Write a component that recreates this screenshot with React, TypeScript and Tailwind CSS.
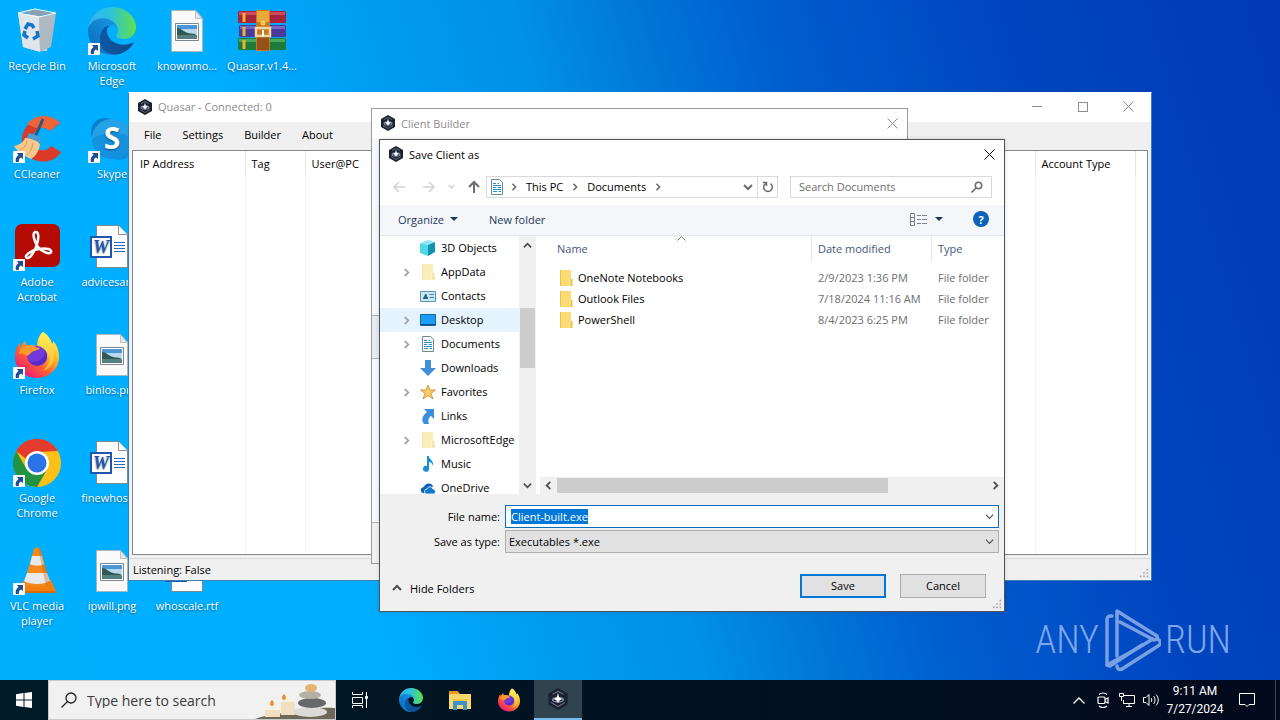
import { useEffect, useRef } from "react";
import type { ReactNode } from "react";

/* ---------- desktop icons ---------- */

const EdgeIcon = ({ className }: { className?: string }) => (
  <svg viewBox="0 0 256 256" className={className}>
    <defs>
      <linearGradient id="edgeDark" x1="0" x2="1">
        <stop offset="0" stopColor="#0c59a4" />
        <stop offset="1" stopColor="#114a8b" />
      </linearGradient>
      <linearGradient id="edgeBlue" x1="1" y1="0" x2="0" y2="1">
        <stop offset="0" stopColor="#1b9de2" />
        <stop offset="1" stopColor="#0669bc" />
      </linearGradient>
      <linearGradient id="edgeGreen" x1="0" x2="1">
        <stop offset="0" stopColor="#35b1f1" />
        <stop offset="0.45" stopColor="#2cc2df" />
        <stop offset="1" stopColor="#5fe04a" />
      </linearGradient>
    </defs>
    <path
      fill="url(#edgeBlue)"
      d="M105.73 241.42a79.2 79.2 0 0 1-22.74-21.34 80.72 80.72 0 0 1 29.53-120c3.12-1.47 8.45-4.13 15.54-4a32.35 32.35 0 0 1 25.69 13 31.88 31.88 0 0 1 6.36 18.66c0-.21 24.46-79.6-80-79.6-43.9 0-80 41.66-80 78.21a130.15 130.15 0 0 0 12.11 56 128 128 0 0 0 156.38 67.11 75.55 75.55 0 0 1-62.78-8z"
    />
    <path
      fill="url(#edgeDark)"
      d="M235.68 190.46a93.73 93.73 0 0 1-10.54 4.71 101.87 101.87 0 0 1-35.9 6.46c-47.32 0-88.54-32.55-88.54-74.32A31.48 31.48 0 0 1 117.13 100c-42.8 1.8-53.8 46.4-53.8 72.53 0 73.88 68.09 81.37 82.76 81.37 7.91 0 19.84-2.3 27-4.56l1.31-.44a128.34 128.34 0 0 0 66.6-52.8 4 4 0 0 0-5.32-5.64z"
    />
    <path
      fill="url(#edgeGreen)"
      d="M152.33 148.86c-.81 1.05-3.3 2.5-3.3 5.66 0 2.61 1.7 5.12 4.72 7.23 14.38 10 41.49 8.68 41.56 8.68a59.56 59.56 0 0 0 30.27-8.35 61.38 61.38 0 0 0 30.43-52.88c.26-22.41-8-37.31-11.34-43.91C223.46 23.84 177.72 0 128 0A128 128 0 0 0 0 126.2c.48-36.54 36.8-66.05 80-66.05 3.5 0 23.46.34 42 10.07 16.34 8.58 24.9 18.94 30.85 29.21 6.18 10.67 7.28 24.15 7.28 29.52s-2.74 13.33-7.8 19.91z"
    />
  </svg>
);

const FirefoxIcon = ({ className }: { className?: string }) => (
  <svg viewBox="0 0 48 48" className={className}>
    <defs>
      <linearGradient id="ffBody" x1="0.85" y1="0.1" x2="0.2" y2="0.95">
        <stop offset="0" stopColor="#fff44f" />
        <stop offset="0.35" stopColor="#ffb02a" />
        <stop offset="0.65" stopColor="#ff5a35" />
        <stop offset="1" stopColor="#e8177c" />
      </linearGradient>
      <linearGradient id="ffTail" x1="0.5" y1="0" x2="0.5" y2="1">
        <stop offset="0" stopColor="#fff25a" />
        <stop offset="1" stopColor="#ffb52c" />
      </linearGradient>
    </defs>
    <path
      fill="url(#ffBody)"
      d="M30 1c5 3 8 8 9 12 1-1 1-2 1-3 4 4 6 10 6 16 0 12-10 21-22 21S2 38 2 26c0-6 2-11 5-14v4c2-3 4-5 6-6 0 2 0 4 1 5 3-1 7-1 10 0 0-6 2-11 6-14z"
    />
    <path
      fill="url(#ffTail)"
      d="M30 1c5 3 8 8 9 13 3 5 3 12 1 17-2 5-6 8-11 9 5-3 8-8 7-14-1-5-5-8-9-9-3-2-2-11 3-16z"
    />
    <circle cx="24" cy="25" r="10" fill="#7139d8" />
    <path fill="#592acb" d="M16 30c4 6 13 6 17 0 2-4 1-8-1-11 1 8-8 14-16 11z" />
    <path
      fill="#ff9a2b"
      d="M8 17c3-3 8-4 12-2 2 1 4 2 7 2-2 3-6 2-8 4-2 1-2 3-5 4-2-2-5-3-8-2 0-2 1-4 2-6z"
    />
  </svg>
);

const ChromeIcon = () => (
  <svg viewBox="0 0 48 48" className="size-12">
    <circle cx="24" cy="24" r="24" fill="#fbc116" />
    <path fill="#e33b2e" d="M24 24 3.2 12A24 24 0 0 1 44.8 12L24 13z" />
    <path fill="#e33b2e" d="M3.2 12A24 24 0 0 1 44.8 12H24L13 20z" />
    <path fill="#229342" d="M3.2 12A24 24 0 0 0 24 48l10.4-18L24 36l-10.4-6z" />
    <circle cx="24" cy="24" r="12" fill="#fff" />
    <circle cx="24" cy="24" r="9.5" fill="#2a74e8" />
  </svg>
);

const RecycleIcon = () => (
  <svg viewBox="0 0 48 48" className="size-12">
    <path fill="#c9d6df" d="M5 6 37 10 34 44 24 44 10 40z" />
    <path fill="#dfe5ea" d="m5 6 21 4 1 35-3-1-14-4z" />
    <path fill="#aeb9c2" d="m26 10 17-4-5 34-11 5z" />
    <path fill="#8f9fab" d="m8 5 15-2 17 3-14 3z" />
    <path fill="none" stroke="#f7fafc" strokeWidth="1.2" d="M5 6 22 2l21 4-17 4z" />
    <g fill="none" stroke="#1273cc" strokeWidth="3.500">
      <path d="m12 22 3-5 4 1 2 3" />
      <path d="m24 24 1 5-5 3" />
      <path d="m15 31-4-3 1-4" />
    </g>
  </svg>
);

const PngIcon = () => (
  <svg viewBox="0 0 48 48" className="size-12">
    <path fill="#fafafa" stroke="#b8b0a8" strokeWidth="0.8" d="M8.500 3.500h24l7 8v33h-31z" />
    <path fill="#e2e6ea" stroke="#b8b0a8" strokeWidth="0.8" d="M32.500 3.500v8h7z" />
    <path fill="#fff" stroke="#7a8894" d="M12.500 16.500h23v17h-23z" />
    <path fill="#4d95d8" d="M14 18h20v6H14z" />
    <path fill="#b8d8ee" d="M14 22h20v5H14z" />
    <path fill="#2f5a52" d="M14 21c4 0 7 4 11 5s6 0 9 2H14z" />
    <path fill="#55807f" d="M14 28h20v4H14z" />
  </svg>
);

const WordIcon = () => (
  <svg viewBox="0 0 48 48" className="size-12">
    <path fill="#fdfdfd" stroke="#777" strokeWidth="0.8" d="M8.500 2.500h22l9 9v33h-31z" />
    <path fill="#fff" stroke="#777" strokeWidth="0.8" d="M30.500 2.500v9h9" />
    <path stroke="#2b67b8" d="M26 19.500h11M26 22.500h11M26 25.500h11M26 28.500h11" />
    <path fill="#fff" stroke="#1d56ad" strokeWidth="2" d="M3 14h20v20H3z" />
    <text x="13" y="30" textAnchor="middle" fontSize="18" fontWeight="700" fontStyle="italic" fill="#1d56ad" fontFamily="Liberation Serif, serif">
      W
    </text>
  </svg>
);

const RarIcon = () => (
  <svg viewBox="0 0 48 48" className="size-12">
    <rect x="0" y="4" width="48" height="12" rx="1.5" fill="#a8243c" />
    <path fill="#d04a5c" d="M1 5h46v3H1z" />
    <rect x="1" y="18" width="47" height="12" rx="1.5" fill="#4a3a9c" />
    <path fill="#7565c4" d="M2 19h45v3H2z" />
    <rect x="0" y="31" width="48" height="12" rx="1.5" fill="#1e7a38" />
    <path fill="#49a95c" d="M1 32h46v3H1z" />
    <path stroke="#f0b428" strokeWidth="3" d="M6 6v9M6 20v9M6 33v9" />
    <path fill="#c8781e" d="M18 3h14v41H18z" />
    <path fill="#e9a83a" d="M19 4h12v11H19z" />
    <path fill="#96501a" d="M19 30h12v13H19z" />
    <path fill="none" stroke="#f2d6a0" strokeWidth="2.500" d="M18 21h14v8H18z" />
    <path stroke="#fff" strokeWidth="2" d="M25 23v6" />
    <circle cx="25" cy="16" r="2.500" fill="#f6cc5a" />
  </svg>
);

const CCleanerIcon = () => (
  <svg viewBox="0 0 48 48" className="size-12">
    <path
      fill="#dc3a28"
      d="M47 8 37 16c-4-5-14-4-17 4-2 7 1 14 8 15 4 1 8-1 10-4l10 6c-5 8-14 11-23 9C13 44 8 33 9 23 11 6 32-6 47 8z"
    />
    <path fill="#f0643c" d="M47 8 37 16c-3-4-9-4-12-2L14 9c8-10 24-11 33-1z" />
    <path stroke="#27597f" strokeWidth="3" d="m30 4-8 18" />
    <path fill="#4a9ad4" d="m16 18 12 4-1 7-14-5z" />
    <path fill="#f6c98a" d="M12 23c6 0 12 3 15 6-1 7-4 12-9 15C11 41 5 37 1 31c5-1 9-3 11-8z" />
    <path fill="none" stroke="#d89a58" d="M14 26c-1 5-4 8-7 9M20 28c-1 6-3 9-6 12" />
  </svg>
);

const SkypeIcon = () => (
  <svg viewBox="0 0 48 48" className="size-12">
    <circle cx="17" cy="17" r="14" fill="#0a7fd0" />
    <circle cx="31" cy="31" r="14" fill="#0a90e0" />
    <circle cx="24" cy="24" r="20" fill="#1592df" />
    <path fill="#35b2ee" fillOpacity="0.5" d="M4 24a20 20 0 0 1 40 0c-8-8-28-8-40 0z" />
    <text x="24" y="34" textAnchor="middle" fontSize="30" fontWeight="700" fill="#fff" fontFamily="Open Sans, sans-serif">
      S
    </text>
  </svg>
);

const AcrobatIcon = () => (
  <svg viewBox="0 0 48 48" className="size-12">
    <rect x="2" y="1" width="45" height="43" rx="7" fill="#b40c05" />
    <path
      fill="none"
      stroke="#fff"
      strokeWidth="2.500"
      d="M22 9c4-1 4 6 2 12-2 7-7 15-10 14-4-2 4-8 12-9 7-1 13 0 12 3s-9 0-13-5c-4-6-6-14-3-15z"
    />
  </svg>
);

const VlcIcon = () => (
  <svg viewBox="0 0 48 48" className="size-12">
    <path fill="#f08010" d="M11 33h27l5 11c0 2-1 2-2 2H7c-1 0-2 0-2-2z" />
    <path fill="#d86a08" d="M5 44h38v2H5z" />
    <path fill="#f58a1c" d="M21 2c1-2 5-2 6 0l10 34c-5 5-21 5-26 0z" />
    <path fill="#e9e9e9" d="m19 9 10 0 2 8c-3 2-11 2-14 0z" />
    <path fill="#e9e9e9" d="m14 26 20 0 3 8c-6 4-20 4-26 0z" />
    <path fill="#c96208" d="m27 2 10 34-4 3L25 1z" fillOpacity="0.35" />
  </svg>
);

const ShortcutBadge = () => (
  <svg viewBox="0 0 12 12" className="absolute bottom-0 left-0 size-3">
    <path fill="#fff" stroke="#c8d0d8" strokeWidth="0.5" d="M0 0h12v12H0z" />
    <path fill="#1f4e96" d="M4 2h6v6L8 6.500C6 7.500 5.500 9 6 11H3C2 8 3 6 5.500 4z" />
  </svg>
);

/* ---------- window icons ---------- */

const QuasarIcon = ({ className }: { className?: string }) => (
  <svg viewBox="0 0 16 16" className={className}>
    <path fill="#1b2130" d="m8 0 7 4v8l-7 4-7-4V4z" />
    <path stroke="#8a95a8" strokeWidth="0.6" fill="none" d="m3 10.500 5 3 5-3M4 4.500l4-2 4 2" />
    <ellipse cx="8" cy="8.500" rx="4.500" ry="2.200" fill="#7d889c" />
    <path fill="#2b3344" d="M5 8h1.500v1.500H5zM9.500 8H11v1.500H9.500z" />
    <path fill="#fff" d="m8 3.500.8 3.200L11 8 8.800 9 8 11l-.8-2L5 8l2.200-1.300z" />
  </svg>
);

const CloseX = () => (
  <svg viewBox="0 0 11 11" className="size-[11px]" fill="none" stroke="currentColor">
    <path d="m.5.5 10 10m0-10-10 10" />
  </svg>
);

const Chevron = ({ dir, className }: { dir: "up" | "down" | "left" | "right"; className?: string }) => {
  const paths = {
    up: "m1 7 4-4 4 4",
    down: "m1 3 4 4 4-4",
    left: "M7 1 3 5l4 4",
    right: "m3 1 4 4-4 4",
  };
  return (
    <svg viewBox="0 0 10 10" className={className ?? "size-[10px]"} fill="none" stroke="currentColor" strokeWidth="2">
      <path d={paths[dir]} />
    </svg>
  );
};

const DocumentIcon = () => (
  <svg viewBox="0 0 16 16" className="size-4">
    <path fill="#fff" stroke="#6f8794" d="M2.500.500h8l3 3v12h-11z" />
    <path stroke="#2a8fc8" d="M4 4.500h3M8.500 4.500H10M4 6.500h8M4 8.500h3M8.500 8.500H12M4 10.500h8M4 12.500h4M9.500 12.500H12" />
  </svg>
);

const FolderIcon = ({ pale }: { pale?: boolean }) => (
  <svg viewBox="0 0 16 16" className="size-4 shrink-0">
    <path fill={pale ? "#fbeebb" : "#fbdc74"} d="M2 0h11v16H2z" />
    <path fill={pale ? "#f5e2a0" : "#eec04c"} d="M2 0h1v16H2zM12 9h2.500v7H12z" />
    <path fill={pale ? "#fff6d6" : "#ffe9a0"} d="M11.500 9.500h1v6h-1z" />
  </svg>
);

const TreeIcon = ({ name }: { name: string }) => {
  switch (name) {
    case "3D Objects":
      return (
        <svg viewBox="0 0 16 16" className="size-4">
          <path fill="#8de8f2" d="M0 3 8 0l7 2-7 3z" />
          <path fill="#4fd8e6" d="m0 3 8 2v11l-8-3z" />
          <path fill="#0f93ae" d="m8 5 7-3v10l-7 4z" />
        </svg>
      );
    case "Contacts":
      return (
        <svg viewBox="0 0 16 16" className="size-4">
          <path fill="#c9e8f6" stroke="#5a93b4" d="M.5 3.500h15v10H.5z" />
          <path fill="#2a5f80" d="M3 11c0-2 1-2 1.500-3C4 6 6.500 5 7 7c0 1-.5 1 0 1.500C8 9 8 10 8 11z" />
          <path stroke="#2c86b8" d="M9.500 6.500H14M9.500 9.500H14" />
        </svg>
      );
    case "Desktop":
      return (
        <svg viewBox="0 0 16 16" className="size-4">
          <path fill="#1b9cf5" stroke="#1464a5" d="M.5 2.500h15v11H.5z" />
          <path stroke="#0f4f88" d="M1 12.500h14" />
        </svg>
      );
    case "Documents":
      return <DocumentIcon />;
    case "Downloads":
      return (
        <svg viewBox="0 0 16 16" className="size-4">
          <path fill="#3f90d8" d="M5 0h6v8h5l-8 8-8-8h5z" />
        </svg>
      );
    case "Favorites":
      return (
        <svg viewBox="0 0 16 16" className="size-4">
          <path fill="#fbcb66" stroke="#c98a34" strokeWidth="0.8" d="m8 1 2 5h5.500L11 9.500l2 5.500-5-3.500L3 15l2-5.500L.5 6H6z" />
        </svg>
      );
    case "Links":
      return (
        <svg viewBox="0 0 16 16" className="size-4">
          <path fill="#3a8fdc" d="M4 1h10v10l-3-3c-3 2-3 5-2 8H4C1 12 2 8 7 4z" />
        </svg>
      );
    case "Music":
      return (
        <svg viewBox="0 0 16 16" className="size-4">
          <path fill="#1590dc" d="M7 0h2c0 4 5 4 4 10-1-3-2-4-4-4v7a3 3 0 1 1-2-3z" />
        </svg>
      );
    case "OneDrive":
      return (
        <svg viewBox="0 0 16 16" className="size-4">
          <path fill="#0b63b5" d="M1 11C0 8 3 7 4 7c1-4 7-5 9-1L8 13H3c-1 0-2-1-2-2z" />
          <path fill="#1478cf" stroke="#fff" strokeWidth="0.8" d="M6 14c-2-1-2-5 1-5 1-3 5-3 6 0 3 0 3 5 1 5z" />
        </svg>
      );
    default:
      return <FolderIcon pale />;
  }
};

/* ---------- data ---------- */

interface Shortcut {
  label: string;
  icon: ReactNode;
  place: string;
  badge?: boolean;
}

const shortcuts: Shortcut[] = [
  { label: "Recycle Bin", icon: <RecycleIcon />, place: "col-start-1 row-start-1" },
  { label: "CCleaner", icon: <CCleanerIcon />, place: "col-start-1 row-start-2", badge: true },
  { label: "Adobe Acrobat", icon: <AcrobatIcon />, place: "col-start-1 row-start-3", badge: true },
  { label: "Firefox", icon: <FirefoxIcon className="size-12" />, place: "col-start-1 row-start-4", badge: true },
  { label: "Google Chrome", icon: <ChromeIcon />, place: "col-start-1 row-start-5", badge: true },
  { label: "VLC media player", icon: <VlcIcon />, place: "col-start-1 row-start-6", badge: true },
  { label: "Microsoft Edge", icon: <EdgeIcon className="size-12" />, place: "col-start-2 row-start-1", badge: true },
  { label: "Skype", icon: <SkypeIcon />, place: "col-start-2 row-start-2", badge: true },
  { label: "advicesart...", icon: <WordIcon />, place: "col-start-2 row-start-3" },
  { label: "binlos.png", icon: <PngIcon />, place: "col-start-2 row-start-4" },
  { label: "finewhose...", icon: <WordIcon />, place: "col-start-2 row-start-5" },
  { label: "ipwill.png", icon: <PngIcon />, place: "col-start-2 row-start-6" },
  { label: "knownmo...", icon: <PngIcon />, place: "col-start-3 row-start-1" },
  { label: "whoscale.rtf", icon: <WordIcon />, place: "col-start-3 row-start-6" },
  { label: "Quasar.v1.4...", icon: <RarIcon />, place: "col-start-4 row-start-1" },
];

const tree = [
  { name: "3D Objects", open: false },
  { name: "AppData", open: true },
  { name: "Contacts", open: false },
  { name: "Desktop", open: true },
  { name: "Documents", open: true },
  { name: "Downloads", open: false },
  { name: "Favorites", open: true },
  { name: "Links", open: false },
  { name: "MicrosoftEdge", open: true },
  { name: "Music", open: false },
  { name: "OneDrive", open: false },
];

const files = [
  { name: "OneNote Notebooks", date: "2/9/2023 1:36 PM", type: "File folder" },
  { name: "Outlook Files", date: "7/18/2024 11:16 AM", type: "File folder" },
  { name: "PowerShell", date: "8/4/2023 6:25 PM", type: "File folder" },
];

/* ---------- windows ---------- */

const ResizeGrip = () => (
  <svg viewBox="0 0 12 12" className="absolute right-[2px] bottom-[2px] size-[10px]" fill="#a8a8a8">
    <path d="M9 1h2v2H9zM9 5h2v2H9zM9 9h2v2H9zM5 5h2v2H5zM5 9h2v2H5zM1 9h2v2H1z" />
  </svg>
);

const MainWindow = () => (
  <section className="absolute top-[92px] left-[128px] flex h-[489px] w-[1024px] flex-col border border-[#3d7fb0] border-t-white bg-[#f0f0f0]">
    <header className="flex h-[29px] items-center bg-white pb-[2px] pl-2 text-[#8c8c8c]">
      <QuasarIcon className="mr-[5px] size-4" />
      <h1 className="flex-1">Quasar - Connected: 0</h1>
      <button aria-label="Minimize" className="flex h-full w-[46px] items-center justify-center">
        <span className="w-[10px] border-t border-current" />
      </button>
      <button aria-label="Maximize" className="flex h-full w-[45px] items-center justify-center">
        <span className="size-[10px] border border-current" />
      </button>
      <button aria-label="Close" className="flex h-full w-[46px] items-center justify-center">
        <CloseX />
      </button>
    </header>
    <nav className="flex h-7 items-center gap-[21px] pb-[3px] pl-[15px]">
      <button>File</button>
      <button>Settings</button>
      <button>Builder</button>
      <button>About</button>
    </nav>
    <div className="mx-[3px] flex-1 border border-[#828790] bg-white">
      <table className="h-full w-full table-fixed border-collapse text-left">
        <colgroup>
          <col className="w-[112px]" />
          <col className="w-[60px]" />
          <col />
          <col className="w-[100px]" />
          <col className="w-3" />
        </colgroup>
        <thead>
          <tr className="h-[25px]">
            <th className="border-r border-[#e5e5e5] pl-[7px] font-normal">IP Address</th>
            <th className="border-r border-[#e5e5e5] pl-[6px] font-normal">Tag</th>
            <th className="border-r border-[#e5e5e5] pl-[6px] font-normal">User@PC</th>
            <th className="border-r border-[#e5e5e5] pl-[6px] font-normal">Account Type</th>
            <th />
          </tr>
        </thead>
        <tbody>
          <tr>
            <td className="border-r border-[#f3f3f3]" />
            <td className="border-r border-[#f3f3f3]" />
            <td className="border-r border-[#f3f3f3]" />
            <td className="border-r border-[#f3f3f3]" />
            <td />
          </tr>
        </tbody>
      </table>
    </div>
    <footer className="mt-[3px] flex h-[22px] items-center border-t border-[#d9d9d9] pl-1">Listening: False</footer>
    <ResizeGrip />
  </section>
);

const BuilderWindow = () => (
  <section className="absolute top-[108px] left-[371px] flex h-[456px] w-[537px] flex-col border border-[#9a9a9a] bg-[#f0f0f0]">
    <header className="flex h-[30px] items-center bg-white pb-[2px] pl-2 text-[#8c8c8c]">
      <QuasarIcon className="mr-[5px] size-4" />
      <h2 className="flex-1">Client Builder</h2>
      <button aria-label="Close" className="flex h-full w-[30px] items-center justify-center">
        <CloseX />
      </button>
    </header>
    <div className="flex h-[384px] flex-col border-b border-[#b4b4b4] bg-[#f7f8fc] pt-[176px]">
      <div className="h-11 border-y border-[#a9b1bd] bg-[#e6eaf2]" />
    </div>
  </section>
);

const SaveDialog = () => {
  const nameRef = useRef<HTMLInputElement>(null);

  useEffect(() => {
    nameRef.current?.focus();
    nameRef.current?.select();
  }, []);

  return (
    <section className="absolute top-[139px] left-[379px] flex h-[473px] w-[626px] flex-col border border-[#4f5358] bg-[#f0f0f0] shadow-[0_0_4px_rgba(0,0,0,0.15)]">
      <header className="flex h-[30px] items-center bg-white pb-[2px] pl-2">
        <QuasarIcon className="mr-[5px] size-4" />
        <h2 className="flex-1">Save Client as</h2>
        <button aria-label="Close" className="flex h-full w-[30px] items-center justify-center">
          <CloseX />
        </button>
      </header>

      {/* Address row */}
      <div className="flex h-[35px] items-center bg-white px-3 pb-[2px]">
        <button aria-label="Back" className="mr-4 text-[#d2d2d2]">
          <svg viewBox="0 0 14 14" className="size-[14px]" fill="none" stroke="currentColor" strokeWidth="1.5">
            <path d="M13 7H2m5-5L2 7l5 5" />
          </svg>
        </button>
        <button aria-label="Forward" className="mr-3 text-[#d2d2d2]">
          <svg viewBox="0 0 14 14" className="size-[14px]" fill="none" stroke="currentColor" strokeWidth="1.5">
            <path d="M1 7h11M7 2l5 5-5 5" />
          </svg>
        </button>
        <button aria-label="Recent locations" className="mr-3 text-[#d2d2d2]">
          <Chevron dir="down" className="size-[7px]" />
        </button>
        <button aria-label="Up" className="mr-[5px] text-[#6e6e6e]">
          <svg viewBox="0 0 14 14" className="size-[14px]" fill="none" stroke="currentColor" strokeWidth="2">
            <path d="M7 13V2M2 7l5-5 5 5" />
          </svg>
        </button>
        <div className="mr-3 flex h-[22px] flex-1 items-center border border-[#d9d9d9] pl-[2px]">
          <DocumentIcon />
          <span className="mr-2 ml-[5px] text-[#6b6b6b]"><Chevron dir="right" className="size-2" /></span>
          <button>This PC</button>
          <span className="mx-2 text-[#6b6b6b]"><Chevron dir="right" className="size-2" /></span>
          <button>Documents</button>
          <span className="ml-2 flex-1 text-[#6b6b6b]"><Chevron dir="right" className="size-2" /></span>
          <button aria-label="Previous locations" className="mr-1 text-[#6b6b6b]">
            <Chevron dir="down" />
          </button>
          <button aria-label="Refresh" className="flex h-full w-5 items-center justify-center border-l border-[#d9d9d9] text-[#6b6b6b]">
            <svg viewBox="0 0 12 12" className="size-3" fill="none" stroke="currentColor" strokeWidth="1.5">
              <path d="M8.500 2.700A4.300 4.300 0 1 1 3.500 2.700M1 1.500h3.500V5" />
            </svg>
          </button>
        </div>
        <label className="flex h-[22px] w-[202px] items-center border border-[#d9d9d9] pr-2 pl-2">
          <input aria-label="Search Documents" placeholder="Search Documents" className="min-w-0 flex-1 outline-none placeholder:text-[#6d6d6d]" />
          <svg viewBox="0 0 12 12" className="size-3" fill="none" stroke="#6d6d6d" strokeWidth="1.6">
            <circle cx="7.500" cy="4.500" r="3.200" />
            <path d="M5 7 .5 11.500" />
          </svg>
        </label>
      </div>

      {/* Command bar */}
      <div className="flex h-[31px] items-center border-b border-[#e4e6e8] bg-[#f4f6f9] pr-[15px] pb-[2px] pl-[18px] text-[#1e395b]">
        <button className="flex w-[91px] items-center gap-[6px]">
          Organize
          <svg viewBox="0 0 8 4" className="h-1 w-2" fill="currentColor"><path d="M0 0h8L4 4z" /></svg>
        </button>
        <button className="mr-auto">New folder</button>
        <button aria-label="Change your view" className="mr-[30px] flex items-center gap-2">
          <svg viewBox="0 0 17 13" className="h-[13px] w-[17px]" fill="none" stroke="#7b838c">
            <path d="M.5.500h4v12h-4zM0 4.500h5M0 8.500h5M7 2.500h4M12 2.500h5M7 6.500h4M12 6.500h5M7 10.500h4M12 10.500h5" />
          </svg>
          <svg viewBox="0 0 8 4" className="h-1 w-2" fill="currentColor"><path d="M0 0h8L4 4z" /></svg>
        </button>
        <button aria-label="Help" className="flex size-4 items-center justify-center rounded-full bg-[#0a63b8] font-bold text-white">
          ?
        </button>
      </div>

      <div className="flex h-[258px] bg-white">
        <ul className="w-[139px] overflow-hidden">
          {tree.map((item) => (
            <li
              key={item.name}
              className={
                item.name === "Desktop"
                  ? "flex h-6 items-center bg-[#e5f3ff] pl-[22px]"
                  : "flex h-6 items-center pl-[22px]"
              }
            >
              <span className="mr-[9px] w-[9px] text-[#a6a6a6]">
                {item.open && <Chevron dir="right" className="size-[9px]" />}
              </span>
              <TreeIcon name={item.name} />
              <span className="ml-[5px] pb-[2px]">{item.name}</span>
            </li>
          ))}
        </ul>
        <div className="flex w-[17px] flex-col items-center bg-[#f0f0f0] text-[#505050]">
          <span className="flex h-[18px] items-center"><Chevron dir="up" className="size-[9px]" /></span>
          <span className="mt-[54px] h-[60px] w-[15px] bg-[#cdcdcd]" />
          <span className="mt-auto flex h-[17px] items-center"><Chevron dir="down" className="size-[9px]" /></span>
        </div>

        <div className="relative ml-1 flex min-w-0 flex-1 flex-col">
          <svg viewBox="0 0 9 5" className="absolute top-0 left-[137px] h-[5px] w-[9px]" fill="none" stroke="#7c7c7c">
            <path d="m.5 4.500 4-4 4 4" />
          </svg>
          <table className="w-full table-fixed text-left">
            <colgroup>
              <col className="w-[272px]" />
              <col className="w-[120px]" />
              <col />
            </colgroup>
            <thead className="text-[#44587c]">
              <tr>
                <th className="pb-[5px] font-normal">
                  <div className="flex h-[26px] items-center border-r border-[#e5e5e5] pb-[2px] pl-[17px]">Name</div>
                </th>
                <th className="pb-[5px] font-normal">
                  <div className="flex h-[26px] items-center border-r border-[#e5e5e5] pb-[2px] pl-[6px]">Date modified</div>
                </th>
                <th className="pb-[5px] font-normal">
                  <div className="flex h-[26px] items-center pb-[2px] pl-[6px]">Type</div>
                </th>
              </tr>
            </thead>
            <tbody>
              {files.map((file) => (
                <tr key={file.name} className="h-[21px] text-[#6d6d6d]">
                  <td className="pl-[18px] text-black">
                    <span className="flex items-center gap-1"><FolderIcon />{file.name}</span>
                  </td>
                  <td className="pl-[6px] whitespace-nowrap">{file.date}</td>
                  <td className="pl-[6px] whitespace-nowrap">{file.type}</td>
                </tr>
              ))}
            </tbody>
          </table>
          <div className="mt-auto flex h-[17px] items-center bg-[#f0f0f0] pr-1 pl-1 text-[#505050]">
            <Chevron dir="left" className="size-[9px]" />
            <span className="mr-auto ml-1 h-[15px] w-[331px] bg-[#cdcdcd]" />
            <Chevron dir="right" className="size-[9px]" />
          </div>
        </div>
      </div>

      {/* File name and type */}
      <div className="mt-[11px] grid grid-cols-[120px_1fr] items-center gap-x-[5px] gap-y-[2px] pr-[5px]">
        <label htmlFor="file-name" className="text-right">File name:</label>
        <div className="flex h-[23px] items-center border border-[#0a6cc0] bg-white pr-1">
          <input
            id="file-name"
            ref={nameRef}
            defaultValue="Client-built.exe"
            className="min-w-0 flex-1 pl-[5px] leading-[15px] outline-none selection:bg-[#0078d7] selection:text-white"
          />
          <button aria-label="Show file names" className="text-[#505050]">
            <svg viewBox="0 0 10 10" className="size-[9px]" fill="none" stroke="currentColor" strokeWidth="1.300"><path d="m1 3 4 4 4-4" /></svg>
          </button>
        </div>
        <label htmlFor="file-type" className="text-right">Save as type:</label>
        <div className="relative">
          <select id="file-type" className="h-[23px] w-full appearance-none border border-[#adadad] bg-[#e1e1e1] pl-[3px]">
            <option>Executables *.exe</option>
          </select>
          <svg viewBox="0 0 10 10" className="pointer-events-none absolute top-[7px] right-[5px] size-[9px]" fill="none" stroke="#505050" strokeWidth="1.300">
            <path d="m1 3 4 4 4-4" />
          </svg>
        </div>
      </div>

      <div className="mt-[21px] flex items-center pr-[18px] pl-3">
        <button className="mr-auto flex items-center gap-2 pt-1">
          <Chevron dir="up" className="size-[10px] text-[#505050]" />
          Hide Folders
        </button>
        <button className="mr-[14px] h-6 w-[86px] border-2 border-[#0078d7] bg-[#e1e1e1] pb-[2px]">Save</button>
        <button className="h-6 w-[86px] border border-[#adadad] bg-[#e1e1e1] pb-[2px]">Cancel</button>
      </div>
      <ResizeGrip />
    </section>
  );
};

/* ---------- wallpaper watermark ---------- */

const Watermark = () => (
  <div className="absolute right-[49px] bottom-2 flex items-center gap-1 font-['Roboto_Condensed','Liberation_Sans_Narrow',Roboto,sans-serif] text-[38px] leading-[62px] font-light text-[#7fa6e8]">
    ANY
    <svg viewBox="0 0 58 64" className="h-16 w-[58px]" fill="none" stroke="#7a9fe3" strokeWidth="3.500" strokeLinejoin="round" strokeLinecap="round">
      <path d="M9 8H7c-2 0-3 2-3 4v45l24-13 22-13" />
      <path d="M14 48V3l40 25c1 2 0 4-3 4L17 14" />
      <path d="m4 57 3 1 32-21M14 58c0 3 2 4 5 3l36-23c3-2 3-4 1-6" />
    </svg>
    RUN
  </div>
);

/* ---------- taskbar ---------- */

const StonesArt = () => (
  <svg viewBox="0 0 80 38" className="h-[38px] w-20">
    <path fill="#6f6757" d="M0 38c16-6 30-5 40-8 14-3 28-4 40-3v11z" />
    <path fill="#f0dfc0" d="M10 26h15v10H10zM26 18h14v16H26z" />
    <path fill="#fbf3df" d="M10 26h15v3H10zM26 18h14v3H26z" />
    <path fill="#f28a2c" d="M17 19c3 3 2 6 0 6s-3-3 0-6zM29 13c3 3 2 6 0 6s-3-3 0-6z" />
    <ellipse cx="55" cy="31" rx="17" ry="5" fill="#dcdad6" />
    <ellipse cx="57" cy="22" rx="14" ry="5" fill="#66686b" />
    <ellipse cx="55" cy="14" rx="11" ry="4" fill="#b5b0a6" />
    <ellipse cx="56" cy="7" rx="6" ry="4" fill="#e2b471" />
  </svg>
);

const Taskbar = () => (
  <footer className="flex h-10 items-center bg-linear-to-r from-[#001a26] to-[#020a1c] text-white">
    <button aria-label="Start" className="flex h-full w-12 items-center justify-center">
      <svg viewBox="0 0 16 16" className="size-4" fill="#fff">
        <path d="M0 2.200 7.500 1v6.500H0zM8.500.9 16 0v7.500H8.500zM0 8.500h7.500V15L0 13.800zM8.500 8.500H16V16l-7.500-.9z" />
      </svg>
    </button>
    <label className="flex h-full w-72 items-center border border-[#c9c9c9] bg-[#f1f1f1] pl-3">
      <svg viewBox="0 0 16 16" className="size-4" fill="none" stroke="#222" strokeWidth="1.300">
        <circle cx="10" cy="6" r="5" />
        <path d="M6.500 9.500.5 15.500" />
      </svg>
      <input aria-label="Type here to search" placeholder="Type here to search" className="ml-[10px] min-w-0 flex-1 text-[14px] outline-none placeholder:text-[#3a3a3a]" />
      <StonesArt />
    </label>
    <button aria-label="Task View" className="flex h-full w-12 items-center justify-center">
      <svg viewBox="0 0 16 16" className="size-4" fill="none" stroke="#fff">
        <path d="M.5 0v2.500h10V0M.5 5.500h10v6H.5zM.5 16v-2.500h10V16M14.500 0v16" />
        <path fill="#fff" d="M13.500 4.500h2v2h-2z" />
      </svg>
    </button>
    <button aria-label="Microsoft Edge" className="flex h-full w-[53px] items-center justify-center">
      <EdgeIcon className="size-6" />
    </button>
    <button aria-label="File Explorer" className="flex h-full w-[46px] items-center justify-center">
      <svg viewBox="0 0 22 20" className="h-5 w-[22px]">
        <path fill="#e89a20" d="M0 1h9l2 3h11v4H0z" />
        <path fill="#fcd669" d="M0 4h22v15H0z" />
        <path fill="#3c91d0" d="M4 11h14v9h-4v-5H8v5H4z" />
        <path fill="#f9c542" d="M4 9h14v2H4z" />
      </svg>
    </button>
    <button aria-label="Firefox" className="flex h-full w-[51px] items-center justify-center">
      <FirefoxIcon className="size-6" />
    </button>
    <button aria-label="Quasar" className="flex h-full w-12 items-center justify-center border-b-2 border-[#76b9ed] bg-[#30444f]">
      <QuasarIcon className="size-[22px]" />
    </button>
    <div className="ml-auto flex h-full items-center">
      <button aria-label="Show hidden icons" className="flex w-6 justify-center">
        <svg viewBox="0 0 12 7" className="h-[7px] w-3" fill="none" stroke="#fff" strokeWidth="1.300"><path d="m.5 6.500 5.500-5.500 5.500 5.500" /></svg>
      </button>
      <button aria-label="Meet Now" className="flex w-6 justify-center">
        <svg viewBox="0 0 16 16" className="size-4" fill="none" stroke="#fff" strokeWidth="1.200">
          <rect x="3" y="5" width="7" height="6.500" rx="1" />
          <path d="m10 7.500 3-1.500v5l-3-1.500M4 2.500c2-2 6-2 8 0M4 14c2 2 6 2 8 0" />
        </svg>
      </button>
      <button aria-label="Network" className="flex w-6 justify-center">
        <svg viewBox="0 0 16 16" className="size-4" fill="none" stroke="#fff">
          <path d="M5 3.500h10.500v8h-11V8M7 14.500h6M10 12v2.500M.5 1.500h4v3h-4zM2.500 5v4" />
        </svg>
      </button>
      <button aria-label="Volume" className="flex w-6 justify-center">
        <svg viewBox="0 0 16 16" className="size-4" fill="none" stroke="#fff">
          <path d="M.5 5.500H3l3-3v11l-3-3H.5zM8 6c1 1 1 3 0 4M10.500 4c2 2 2 6 0 8M13 2.500c3 3 3 8 0 11" />
        </svg>
      </button>
      <div className="w-16 text-center font-['Roboto',sans-serif] text-[12px] leading-[18px]">
        9:11 AM
        <br />
        7/27/2024
      </div>
      <button aria-label="Notifications" className="flex w-10 justify-center">
        <svg viewBox="0 0 16 16" className="size-4" fill="none" stroke="#fff">
          <path d="M.5 1.500h15v11H10L8 14.500l-2-2H.5z" />
        </svg>
      </button>
      <span className="ml-2 h-full w-[5px] border-l border-[#3b4252]" />
    </div>
  </footer>
);

export default function App() {
  return (
    <div className="flex h-screen flex-col overflow-hidden font-['Open_Sans','Noto_Sans',sans-serif] text-[11px] leading-[15px] text-black">
      <main className="relative flex-1 overflow-hidden bg-[linear-gradient(74deg,#00b0ff_0%,#00aeff_26%,#009cf2_38%,#0090e8_48%,#007ada_55%,#0060d0_64%,#0046c0_80%,#003ab4_100%)]">
        <div className="grid auto-rows-[108px] grid-cols-[repeat(4,75px)] pt-[7px] text-white">
          {shortcuts.map((item) => (
            <a
              key={item.label}
              href="#"
              className={`flex flex-col items-center pr-px text-center [text-shadow:0_1px_2px_rgba(0,0,0,0.5)] ${item.place}`}
            >
              <span className="relative">
                {item.icon}
                {item.badge && <ShortcutBadge />}
              </span>
              <span className="mt-[3px] w-[72px]">{item.label}</span>
            </a>
          ))}
        </div>
        <Watermark />
        <MainWindow />
        <BuilderWindow />
        <SaveDialog />
      </main>
      <Taskbar />
    </div>
  );
}
